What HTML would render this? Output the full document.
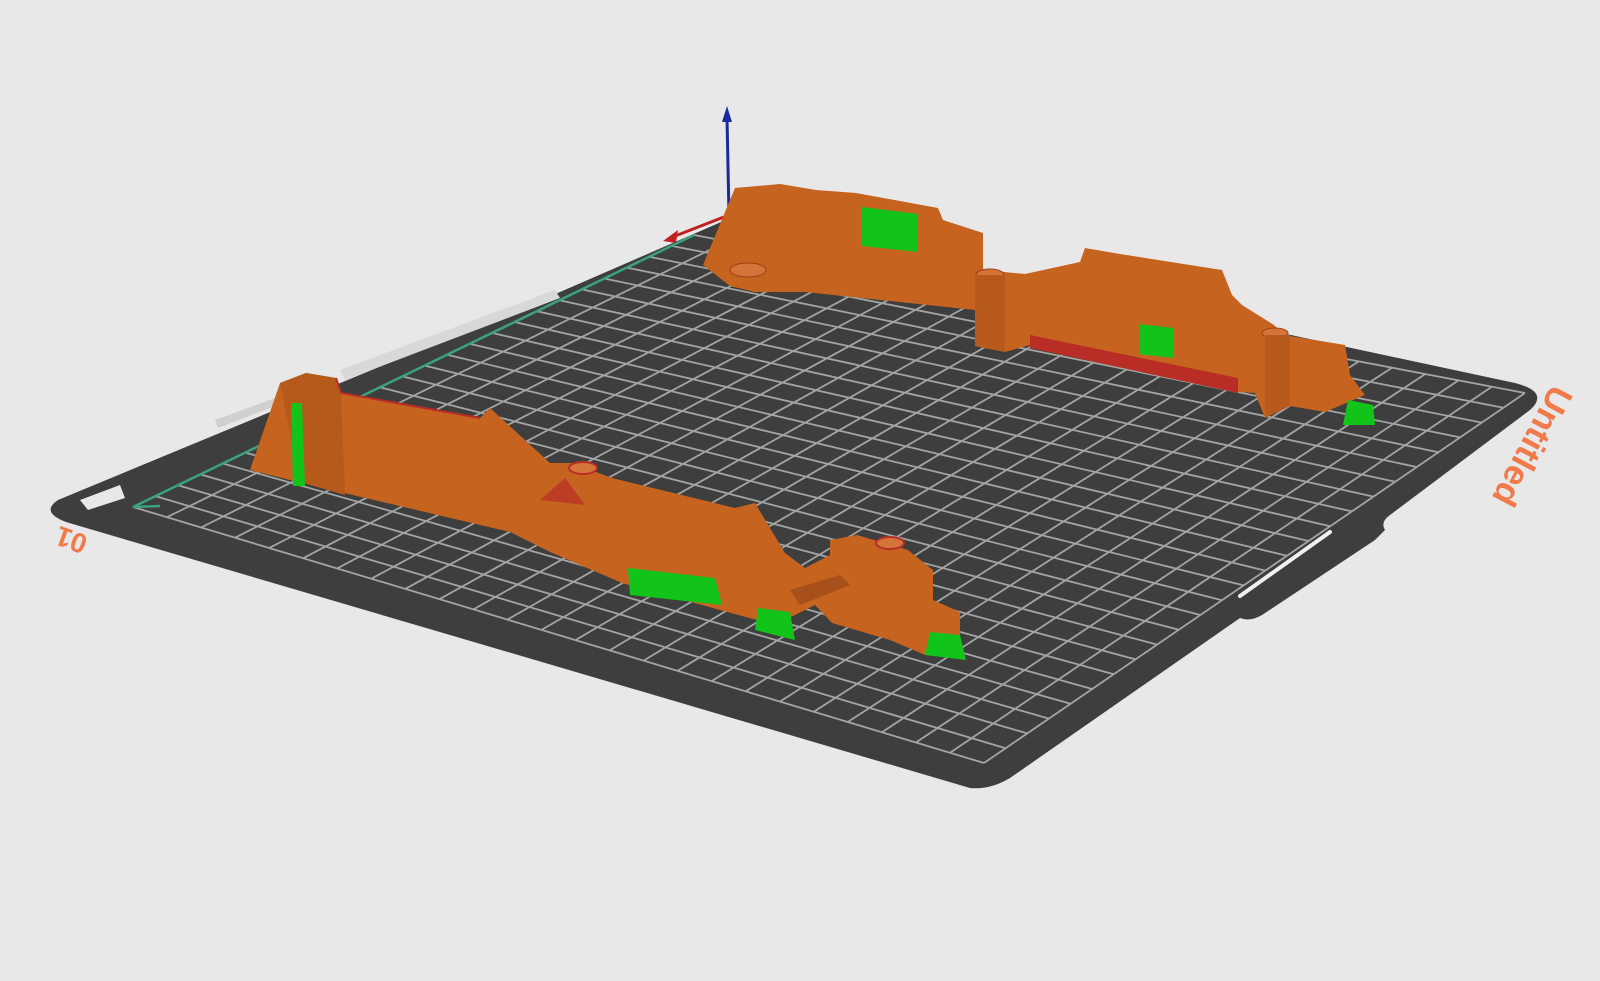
<!DOCTYPE html>
<html><head><meta charset="utf-8"><style>
html,body{margin:0;padding:0;background:#e8e8e8;width:1600px;height:981px;overflow:hidden}
svg{display:block}
</style></head><body>
<svg id="s" width="1600" height="981" viewBox="0 0 1600 981" xmlns="http://www.w3.org/2000/svg">
<rect width="1600" height="981" fill="#e8e8e8"/>
<path d="M58,500 L560,292 L735,216 L1515,383 Q1550,392 1530,410 L1390,515 Q1380,522 1385,530 L1375,540 L1262,615 Q1250,622 1240,618 L1010,778 Q990,790 970,788 L66,522 Q40,512 58,500 Z" fill="#3d3e3d"/>
<g id="grid" stroke="#a3a5a4" stroke-width="1.8" fill="none"></g>
<path d="M160,506 L133,507 L694,235" stroke="#3aa37a" stroke-width="2.5" fill="none"/>
<path d="M340,370 L555,290 L560,298 L345,380 Z" fill="#d8d8d8"/>
<path d="M215,420 L275,398 L278,405 L218,428 Z" fill="#d0d0d0"/>
<path d="M80,500 L120,485 L125,498 L88,510 Z" fill="#e8e8e8"/>
<text x="0" y="0" transform="translate(1340,362) rotate(196)" font-family="Liberation Sans,sans-serif" font-weight="bold" font-size="20" fill="#c8c8c8">Bambu</text>
<path d="M1240,596 L1330,532" stroke="#f0f0f0" stroke-width="4" stroke-linecap="round"/>
<text transform="translate(1530,445) rotate(118)" font-family="Liberation Sans,sans-serif" font-weight="bold" font-size="35" fill="#f07a4a" text-anchor="middle" dominant-baseline="middle">Untitled</text>
<text transform="translate(72,538) rotate(200)" font-family="Liberation Sans,sans-serif" font-weight="bold" font-size="28" fill="#f07a4a" text-anchor="middle" dominant-baseline="middle">01</text>
<path d="M729,215 L670,238" stroke="#c02020" stroke-width="3"/>
<path d="M663,241 L678,230 L676,243 Z" fill="#c02020"/>
<path d="M729,215 L727,118" stroke="#1a2a9a" stroke-width="3"/>
<path d="M727,106 L722,122 L732,122 Z" fill="#1a2a9a"/>
<path d="M703,265 L735,188 L780,184 L816,190 L856,193 L938,208 L943,220 L983,233 L983,270 L1025,274 L1080,262 L1085,248 L1120,254 L1222,270 L1232,295 L1242,305 L1274,325 L1284,335 L1345,345 L1350,375 L1365,395 L1325,412 L1290,406 L1265,418 L1255,393 L1238,392 L1030,345 L1005,352 L975,346 L975,310 L805,292 L755,292 L730,286 Z" fill="#c5631f"/>
<path d="M1030,335 L1238,378 L1238,393 L1030,348 Z" fill="#b82d25"/>
<path d="M862,207 L918,214 L918,252 L862,246 Z" fill="#12c41a"/>
<path d="M1139,324 L1174,328 L1174,358 L1139,354 Z" fill="#12c41a"/>
<path d="M1348,400 L1373,405 L1375,425 L1343,425 Z" fill="#12c41a"/>
<ellipse cx="748" cy="270" rx="18" ry="7" fill="#d4733a" stroke="#a04010"/>
<ellipse cx="990" cy="275" rx="14" ry="6" fill="#d4733a" stroke="#a04010"/>
<ellipse cx="1275" cy="333" rx="13" ry="5" fill="#d4733a" stroke="#a04010"/>
<path d="M975,275 L1005,275 L1005,352 L975,346 Z" fill="#b85a1c"/>
<path d="M1265,335 L1290,335 L1290,406 L1265,418 Z" fill="#b85a1c"/>
<path d="M250,470 L280,383 L306,373 L336,378 L341,393 L480,418 L490,408 L550,463 L572,463 L612,478 L735,508 L755,503 L785,553 L805,568 L830,555 L830,540 L857,535 L908,550 L933,570 L933,600 L960,612 L960,655 L925,655 L890,640 L832,623 L815,605 L775,625 L622,583 L550,552 L510,532 L340,492 L298,482 Z" fill="#c5631f"/>
<path d="M280,383 L306,373 L336,378 L341,393 L345,495 L300,482 Z" fill="#b65a1c"/>
<path d="M336,378 L341,393 L480,418" stroke="#b82d25" stroke-width="2" fill="none"/>
<path d="M291,403 L302,403 L305,486 L293,486 Z" fill="#12c41a"/>
<path d="M628,568 L715,578 L722,605 L630,595 Z" fill="#12c41a"/>
<path d="M758,608 L790,612 L795,640 L755,630 Z" fill="#12c41a"/>
<path d="M930,632 L960,635 L966,660 L925,655 Z" fill="#12c41a"/>
<ellipse cx="583" cy="468" rx="14" ry="6" fill="#d4733a" stroke="#b82d25" stroke-width="2"/>
<ellipse cx="890" cy="543" rx="14" ry="6" fill="#d4733a" stroke="#b82d25" stroke-width="2"/>
<path d="M540,500 L565,478 L585,505 Z" fill="#b82d25" opacity="0.7"/>
<path d="M790,590 L840,575 L850,585 L800,605 Z" fill="#a8501a"/>
</svg>
<script>
(function(){
var L=[133,507],B=[694,235],R=[1525,393],F=[984,763],N=25;
function lerp(a,b,t){return [a[0]+(b[0]-a[0])*t,a[1]+(b[1]-a[1])*t];}
var g=document.getElementById('grid'),d='';
for(var i=0;i<=N;i++){var t=i/N;
 var p=lerp(L,B,t),q=lerp(F,R,t);d+='M'+p[0].toFixed(1)+','+p[1].toFixed(1)+'L'+q[0].toFixed(1)+','+q[1].toFixed(1);
 p=lerp(L,F,t);q=lerp(B,R,t);d+='M'+p[0].toFixed(1)+','+p[1].toFixed(1)+'L'+q[0].toFixed(1)+','+q[1].toFixed(1);}
var e=document.createElementNS('http://www.w3.org/2000/svg','path');e.setAttribute('d',d);g.appendChild(e);
})();
</script>
</body></html>
